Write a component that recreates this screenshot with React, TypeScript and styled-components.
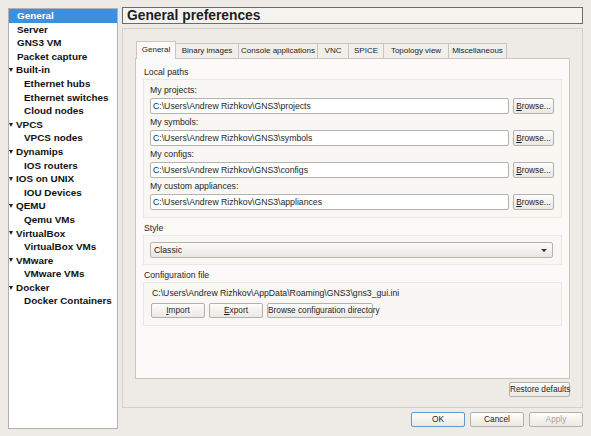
import React from 'react'
import styled, { createGlobalStyle, css } from 'styled-components'

const Global = createGlobalStyle`
  html, body { margin: 0; padding: 0; background: #eeeae6; }
  body { font-family: "Liberation Sans", Arial, sans-serif; font-size: 9px; color: #1e1e1e; }
  * { box-sizing: border-box; }
`

const Window = styled.div`
  width: 591px;
  height: 436px;
  display: flex;
  padding: 7px 8px 0 8px;
  gap: 4px;
  background: #eeeae6;
  overflow: hidden;
`

const Sidebar = styled.div`
  width: 110px;
  height: 421px;
  margin-top: 1px;
  background: #ffffff;
  border: 1px solid #b4b0ab;
  display: flex;
  flex-direction: column;
`

const TreeRow = styled.div<{ $depth: number; $selected?: boolean }>`
  height: 13.6px;
  line-height: 13.6px;
  font-family: "Liberation Sans", Arial, sans-serif;
  font-size: 9.9px;
  font-weight: bold;
  white-space: nowrap;
  display: flex;
  align-items: center;
  padding-left: ${p => (p.$depth === 2 ? 15 : 8)}px;
  color: ${p => (p.$selected ? '#fff' : '#111')};
  background: ${p => (p.$selected ? '#3f8fdf' : 'transparent')};
`

const Arrow = styled.span`
  width: 0;
  height: 0;
  margin-left: -8px;
  margin-right: 3px;
  border-left: 2.5px solid transparent;
  border-right: 2.5px solid transparent;
  border-top: 4px solid #222;
`

const Main = styled.div`
  flex: 1;
  display: flex;
  flex-direction: column;
`

const Title = styled.div`
  height: 17px;
  border: 1px solid #6e6c69;
  background: #f5f3f0;
  font-family: "Liberation Sans", Arial, sans-serif;
  font-weight: bold;
  font-size: 13.8px;
  line-height: 15px;
  padding-left: 4px;
`

const Frame = styled.div`
  margin-top: 4px;
  height: 380px;
  border: 1px solid #d3cfca;
  padding: 12px 12px 0 12px;
  display: flex;
  flex-direction: column;
`

const TabBar = styled.div`
  display: flex;
  align-items: flex-end;
  height: 17px;
  padding-left: 1px;
  position: relative;
  z-index: 1;
`

const Tab = styled.div<{ $w: number; $active?: boolean }>`
  width: ${p => p.$w}px;
  text-align: center;
  border: 1px solid #c9c5c0;
  border-bottom: none;
  margin-left: -1px;
  white-space: nowrap;
  font-size: 8px;
  ${p =>
    p.$active
      ? css`
          height: 18px;
          line-height: 16px;
          background: #fcfaf8;
          margin-bottom: -1px;
          margin-left: 0;
        `
      : css`
          height: 15px;
          line-height: 14px;
          background: #f1eeeb;
        `}
`

const Pane = styled.div`
  height: 321px;
  background: #fcfaf8;
  border: 1px solid #c9c5c0;
  padding: 7px 7px 0 7px;
  display: flex;
  flex-direction: column;
`

const SectionLabel = styled.div<{ $first?: boolean }>`
  height: 13px;
  line-height: 13px;
  margin-top: ${p => (p.$first ? 0 : 4)}px;
  padding-left: 1px;
  font-size: 8.7px;
`

const Group = styled.div<{ $pad: string }>`
  background: #f9f7f4;
  border: 1px solid #ebe7e2;
  padding: ${p => p.$pad};
  display: flex;
  flex-direction: column;
`

const FieldLabel = styled.div`
  height: 14px;
  line-height: 14px;
  font-size: 8.7px;
`

const FieldRow = styled.div`
  display: flex;
  gap: 4px;
  margin: 1px 0;
`

const Input = styled.div`
  flex: 1;
  height: 16px;
  line-height: 14px;
  background: #fff;
  border: 1px solid #b7b3ae;
  border-radius: 2px;
  padding-left: 2px;
  font-size: 8.7px;
  white-space: nowrap;
  overflow: hidden;
`

const Button = styled.div<{ $w: number; $h?: number; $default?: boolean; $disabled?: boolean }>`
  width: ${p => p.$w}px;
  height: ${p => p.$h ?? 15}px;
  line-height: ${p => (p.$h ?? 15) - 2}px;
  text-align: center;
  font-size: 8.3px;
  white-space: nowrap;
  border: 1px solid ${p => (p.$default ? '#5c9ad0' : '#b4b0ab')};
  border-radius: 2px;
  background: linear-gradient(#fdfdfc, #ebe8e4);
  color: ${p => (p.$disabled ? '#a6a39f' : '#1e1e1e')};
  u { text-decoration: underline; }
`

const Combo = styled.div`
  height: 16px;
  line-height: 14px;
  border: 1px solid #b7b3ae;
  border-radius: 2px;
  background: linear-gradient(#fbfaf9, #e9e6e2);
  padding-left: 3px;
  display: flex;
  justify-content: space-between;
  align-items: center;
  font-size: 8.7px;
`

const ComboArrow = styled.span`
  width: 0;
  height: 0;
  margin-right: 5px;
  border-left: 3px solid transparent;
  border-right: 3px solid transparent;
  border-top: 3px solid #333;
`

const PathText = styled.div`
  height: 13px;
  line-height: 13px;
  padding-left: 1px;
  font-size: 8.7px;
`

const ButtonRow = styled.div<{ $gap: number; $justify?: string; $top?: number }>`
  display: flex;
  gap: ${p => p.$gap}px;
  justify-content: ${p => p.$justify ?? 'flex-start'};
  margin-top: ${p => p.$top ?? 0}px;
`

const tree: { label: string; depth: number; arrow?: boolean; selected?: boolean }[] = [
  { label: 'General', depth: 1, selected: true },
  { label: 'Server', depth: 1 },
  { label: 'GNS3 VM', depth: 1 },
  { label: 'Packet capture', depth: 1 },
  { label: 'Built-in', depth: 1, arrow: true },
  { label: 'Ethernet hubs', depth: 2 },
  { label: 'Ethernet switches', depth: 2 },
  { label: 'Cloud nodes', depth: 2 },
  { label: 'VPCS', depth: 1, arrow: true },
  { label: 'VPCS nodes', depth: 2 },
  { label: 'Dynamips', depth: 1, arrow: true },
  { label: 'IOS routers', depth: 2 },
  { label: 'IOS on UNIX', depth: 1, arrow: true },
  { label: 'IOU Devices', depth: 2 },
  { label: 'QEMU', depth: 1, arrow: true },
  { label: 'Qemu VMs', depth: 2 },
  { label: 'VirtualBox', depth: 1, arrow: true },
  { label: 'VirtualBox VMs', depth: 2 },
  { label: 'VMware', depth: 1, arrow: true },
  { label: 'VMware VMs', depth: 2 },
  { label: 'Docker', depth: 1, arrow: true },
  { label: 'Docker Containers', depth: 2 },
]

const tabs = [
  { label: 'General', w: 40, active: true },
  { label: 'Binary images', w: 64 },
  { label: 'Console applications', w: 80 },
  { label: 'VNC', w: 32 },
  { label: 'SPICE', w: 36 },
  { label: 'Topology view', w: 66 },
  { label: 'Miscellaneous', w: 59 },
]

const paths = [
  { label: 'My projects:', value: 'C:\\Users\\Andrew Rizhkov\\GNS3\\projects' },
  { label: 'My symbols:', value: 'C:\\Users\\Andrew Rizhkov\\GNS3\\symbols' },
  { label: 'My configs:', value: 'C:\\Users\\Andrew Rizhkov\\GNS3\\configs' },
  { label: 'My custom appliances:', value: 'C:\\Users\\Andrew Rizhkov\\GNS3\\appliances' },
]

export default function App() {
  return (
    <>
      <Global />
      <Window>
        <Sidebar>
          {tree.map((item, i) => (
            <TreeRow key={'t' + i} $depth={item.depth} $selected={item.selected}>
              {item.arrow && <Arrow />}
              {item.label}
            </TreeRow>
          ))}
        </Sidebar>
        <Main>
          <Title>General preferences</Title>
          <Frame>
            <TabBar>
              {tabs.map((t, i) => (
                <Tab key={'tab' + i} $w={t.w} $active={t.active}>{t.label}</Tab>
              ))}
            </TabBar>
            <Pane>
              <SectionLabel $first>Local paths</SectionLabel>
              <Group $pad="3px 7px 6px 6px">
                {paths.map((p, i) => (
                  <React.Fragment key={'p' + i}>
                    <FieldLabel>{p.label}</FieldLabel>
                    <FieldRow>
                      <Input>{p.value}</Input>
                      <Button $w={41} $h={16}><u>B</u>rowse...</Button>
                    </FieldRow>
                  </React.Fragment>
                ))}
              </Group>
              <SectionLabel>Style</SectionLabel>
              <Group $pad="6px 8px 6px 6px">
                <Combo>
                  Classic
                  <ComboArrow />
                </Combo>
              </Group>
              <SectionLabel>Configuration file</SectionLabel>
              <Group $pad="4px 7px 7px 7px">
                <PathText>C:\Users\Andrew Rizhkov\AppData\Roaming\GNS3\gns3_gui.ini</PathText>
                <ButtonRow $gap={4} $top={3}>
                  <Button $w={54}><u>I</u>mport</Button>
                  <Button $w={54}><u>E</u>xport</Button>
                  <Button $w={106}>Browse configuration directory</Button>
                </ButtonRow>
              </Group>
            </Pane>
            <ButtonRow $gap={0} $justify="flex-end" $top={3}>
              <Button $w={61}>Restore defaults</Button>
            </ButtonRow>
          </Frame>
          <ButtonRow $gap={5} $justify="flex-end" $top={4}>
            <Button $w={54} $default>OK</Button>
            <Button $w={54}>Cancel</Button>
            <Button $w={54} $disabled>Apply</Button>
          </ButtonRow>
        </Main>
      </Window>
    </>
  )
}
